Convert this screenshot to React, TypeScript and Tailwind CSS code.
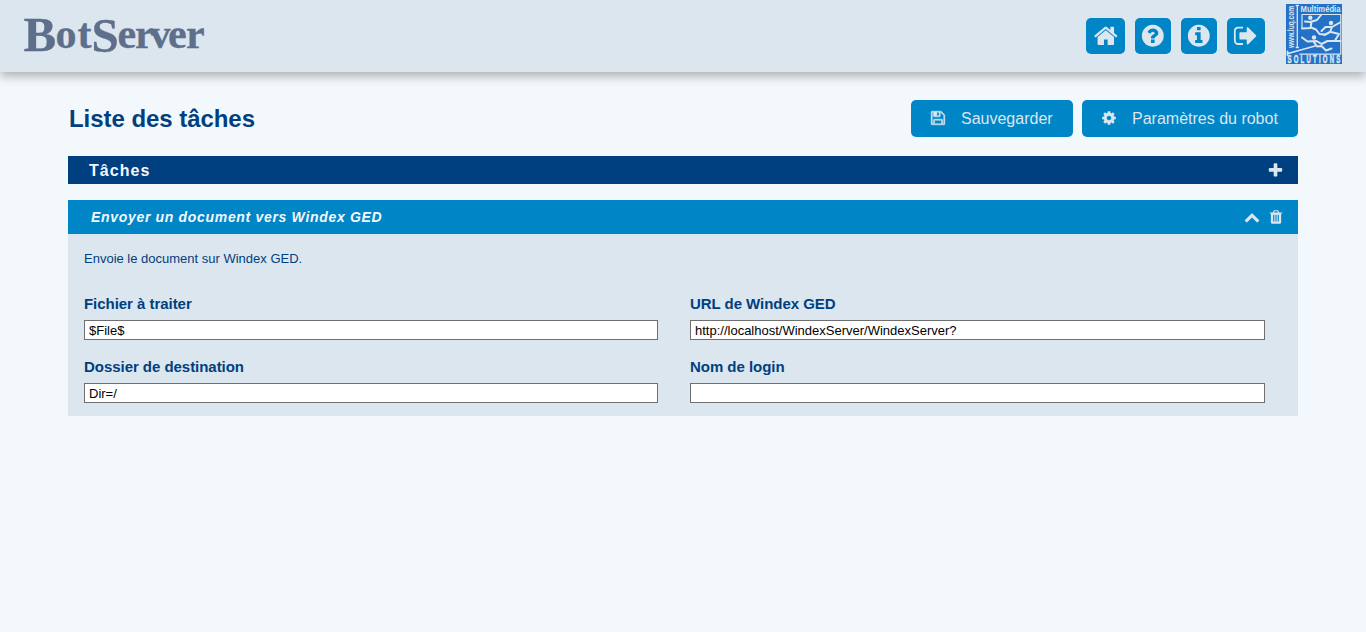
import React from "react";

const CIRCLE =
  "M1664 896q0 209-103 385.5t-279.5 279.5-385.5 103-385.5-103-279.5-279.5-103-385.5 103-385.5 279.5-279.5 385.5-103 385.5 103 279.5 279.5 103 385.5z";

const ICONS = {
  home: "M1472 992v480q0 26-19 45t-45 19h-384v-384h-256v384h-384q-26 0-45-19t-19-45v-480q0-1 .5-3t.5-3l575-474 575 474q1 2 1 6zm223-69l-62 74q-8 9-21 11h-3q-13 0-21-7l-692-577-692 577q-12 8-24 7-13-2-21-11l-62-74q-8-10-7-23.5t11-21.5l719-599q32-26 76-26t76 26l244 204v-195q0-14 9-23t23-9h192q14 0 23 9t9 23v408l219 182q10 8 11 21.5t-7 23.5z",
  help:
    "M1024 1376v-192q0-14-9-23t-23-9h-192q-14 0-23 9t-9 23v192q0 14 9 23t23 9h192q14 0 23-9t9-23zm256-672q0-88-55.5-163t-138.5-116-170-41q-243 0-371 213-15 24 8 42l132 100q7 6 19 6 16 0 25-12 53-68 86-92 34-24 86-24 48 0 85.5 26t37.5 59q0 38-20 61t-68 45q-63 28-115.5 86.5t-52.5 125.5v36q0 14 9 23t23 9h192q14 0 23-9t9-23q0-19 21.5-49.5t54.5-49.5q32-18 49-28.5t46-35 44.5-48 28-60.5 12.5-81z" +
    CIRCLE,
  info:
    "M1152 1376v-160q0-14-9-23t-23-9h-96v-512q0-14-9-23t-23-9h-320q-14 0-23 9t-9 23v160q0 14 9 23t23 9h96v320h-96q-14 0-23 9t-9 23v160q0 14 9 23t23 9h448q14 0 23-9t9-23zm-128-896v-160q0-14-9-23t-23-9h-192q-14 0-23 9t-9 23v160q0 14 9 23t23 9h192q14 0 23-9t9-23z" +
    CIRCLE,
  signOut:
    "M704 1440q0 4 1 20t.5 26.5-3 23.5-10 19.5-20.5 6.5h-320q-119 0-203.5-84.5t-84.5-203.5v-704q0-119 84.5-203.5t203.5-84.5h320q13 0 22.5 9.5t9.5 22.5q0 4 1 20t.5 26.5-3 23.5-10 19.5-20.5 6.5h-320q-66 0-113 47t-47 113v704q0 66 47 113t113 47h312l11.5 1 11.5 3 8 5.5 7 9 2 13.5zm928-544q0 26-19 45l-544 544q-19 19-45 19t-45-19-19-45v-288h-448q-26 0-45-19t-19-45v-384q0-26 19-45t45-19h448v-288q0-26 19-45t45-19 45 19l544 544q19 19 19 45z",
  save: "M512 1536h768v-384h-768v384zm896 0h128v-896q0-14-10-38.5t-20-34.5l-281-281q-10-10-34-20t-39-10v416q0 40-28 68t-68 28h-576q-40 0-68-28t-28-68v-416h-128v1280h128v-416q0-40 28-68t68-28h832q40 0 68 28t28 68v416zm-384-928v-320q0-13-9.5-22.5t-22.5-9.5h-192q-13 0-22.5 9.5t-9.5 22.5v320q0 13 9.5 22.5t22.5 9.5h192q13 0 22.5-9.5t9.5-22.5zm640 32v928q0 40-28 68t-68 28h-1344q-40 0-68-28t-28-68v-1344q0-40 28-68t68-28h928q40 0 88 20t76 48l280 280q28 28 48 76t20 88z",
  cog: "M1152 896q0-106-75-181t-181-75-181 75-75 181 75 181 181 75 181-75 75-181zm512-109v222q0 12-8 23t-20 13l-185 28q-19 54-39 91 35 50 107 138 10 12 10 25t-9 23q-27 37-99 108t-94 71q-12 0-26-9l-138-108q-44 23-91 38-16 136-29 186-7 28-36 28h-222q-14 0-24.5-8.5t-11.5-21.5l-28-184q-49-16-90-37l-141 107q-10 9-25 9-14 0-25-11-126-114-165-168-7-10-7-23 0-12 8-23 15-21 51-66.5t54-70.5q-27-50-41-99l-183-27q-13-2-21-12.5t-8-23.5v-222q0-12 8-23t19-13l186-28q14-46 39-92-40-57-107-138-10-12-10-24 0-10 9-23 26-36 98.5-107.5t94.5-71.5q13 0 26 10l138 107q44-23 91-38 16-136 29-186 7-28 36-28h222q14 0 24.5 8.5t11.5 21.5l28 184q49 16 90 37l142-107q9-9 24-9 13 0 25 10 129 119 165 170 7 8 7 22 0 12-8 23-15 21-51 66.5t-54 70.5q26 50 41 98l183 28q13 2 21 12.5t8 23.5z",
  plus: "M1600 736v192q0 40-28 68t-68 28h-416v416q0 40-28 68t-68 28h-192q-40 0-68-28t-28-68v-416h-416q-40 0-68-28t-28-68v-192q0-40 28-68t68-28h416v-416q0-40 28-68t68-28h192q40 0 68 28t28 68v416h416q40 0 68 28t28 68z",
  chevronUp:
    "M1683 1331l-166 165q-19 19-45 19t-45-19l-531-531-531 531q-19 19-45 19t-45-19l-166-165q-19-19-19-45.5t19-45.5l742-741q19-19 45-19t45 19l742 741q19 19 19 45.5t-19 45.5z",
  trash:
    "M704 1376v-704q0-14-9-23t-23-9h-64q-14 0-23 9t-9 23v704q0 14 9 23t23 9h64q14 0 23-9t9-23zm256 0v-704q0-14-9-23t-23-9h-64q-14 0-23 9t-9 23v704q0 14 9 23t23 9h64q14 0 23-9t9-23zm256 0v-704q0-14-9-23t-23-9h-64q-14 0-23 9t-9 23v704q0 14 9 23t23 9h64q14 0 23-9t9-23zm-544-992h448l-48-117q-7-9-17-11h-317q-10 2-17 11zm928 32v64q0 14-9 23t-23 9h-96v948q0 83-47 143.5t-113 60.5h-832q-66 0-113-58.5t-47-141.5v-952h-96q-14 0-23-9t-9-23v-64q0-14 9-23t23-9h309l70-167q15-37 54-63t79-26h320q40 0 79 26t54 63l70 167h309q14 0 23 9t9 23z",
};

function Icon({ name, className }: { name: keyof typeof ICONS; className: string }) {
  return (
    <svg viewBox="0 0 1792 1792" fill="currentColor" fillRule="evenodd" className={"shrink-0 " + className} aria-hidden="true">
      <path d={ICONS[name]} />
    </svg>
  );
}

function Wordmark() {
  return (
    <svg width="190" height="72" viewBox="20 0 190 72" className="block overflow-visible">
      <text
        fill="#5d6f8a"
        stroke="#5d6f8a"
        strokeWidth="0.3"
        fontFamily="'Liberation Serif', serif"
        fontWeight="700"
        fontSize="42"
      >
        <tspan x="23.5" y="51" fontSize="49">B</tspan>
        <tspan x="55.5 77.5" y="48">ot</tspan>
        <tspan x="91.5" y="52" fontSize="49">S</tspan>
        <tspan x="117.5 135 149.5 168 186" y="48">erver</tspan>
      </text>
    </svg>
  );
}

function PartnerLogo() {
  return (
    <svg width="56" height="60" viewBox="0 0 56 60" className="block overflow-visible">
      <rect width="56" height="60" fill="#2372c8" />
      <g fill="#dce6ee" fontFamily="'Liberation Sans', sans-serif">
        <text x="14.5" y="8.4" fontSize="9.5" fontWeight="700" textLength="40" lengthAdjust="spacingAndGlyphs">Multimédia</text>
        <text transform="translate(8 44) rotate(-90)" fontSize="9" fontWeight="700" textLength="42" lengthAdjust="spacingAndGlyphs">www.luq.com</text>
        <text
          transform="translate(1.5 59) scale(0.6 1)"
          fontSize="10"
          fontWeight="700"
          stroke="#dce6ee"
          strokeWidth="0.5"
          textLength="88"
          lengthAdjust="spacing"
        >
          SOLUTIONS
        </text>
      </g>
      <g fill="none" stroke="#dce6ee" strokeWidth="2" strokeLinecap="round" strokeLinejoin="round">
        <path d="M11.3 1.5v42M10.2 1.5h2.2M10.2 43.5h2.2" strokeWidth="1.3" />
        <path d="M16 23.5v-13h38.8v39.7h-41" strokeWidth="1.2" />
        <path d="M2 49.5L29 42M1.5 47.5v3.5" strokeWidth="1.8" />
        <path d="M19 17.5l5 .5 7-2 4-5M25.5 18l-1 6-8.5 .5M25 23.5l5 2 3.5 4.5 5 .5" />
        <path d="M54 18.5l-8 4.5-6.5 0-4 4M46 23l-2 5-5.5 3M45 28l8 2-4 6.5" />
        <path d="M16 33.5l5.5 4 9-.5 5 3 6-3h13M27.5 37.5l3.5 5 4.5-.5 4.5 4.5 5.5-2" />
      </g>
      <g fill="#dce6ee">
        <circle cx="24.3" cy="13.8" r="2.2" />
        <circle cx="45" cy="19" r="2.2" />
        <circle cx="28" cy="33.5" r="2.2" />
      </g>
    </svg>
  );
}

const square = "flex h-9 items-center justify-center rounded-[5px] bg-[#0085c7] text-[#dce6ee]";

function Header() {
  return (
    <header className="flex h-[72px] justify-between bg-[#dce6ef] pr-6 pl-5 shadow-[0_4px_10px_rgba(0,0,0,0.3)]">
      <Wordmark />
      <nav className="flex">
        <div className="mr-[21px] flex gap-2.5 pt-[18px]">
          <button className={square + " w-[39px]"} aria-label="Accueil"><Icon name="home" className="size-[25.6px]" /></button>
          <button className={square + " w-9"} aria-label="Aide"><Icon name="help" className="size-[25.6px]" /></button>
          <button className={square + " w-9"} aria-label="Informations"><Icon name="info" className="size-[25.6px]" /></button>
          <button className={square + " w-[38px]"} aria-label="Quitter"><Icon name="signOut" className="size-[25.6px]" /></button>
        </div>
        <div className="pt-1"><PartnerLogo /></div>
      </nav>
    </header>
  );
}

function Field({ label, value }: { label: string; value: string }) {
  return (
    <label className="block">
      <span className="block h-[25px] text-[15px] leading-[18px] font-bold tracking-[-0.04px] text-[#004080]">{label}</span>
      <input
        type="text"
        defaultValue={value}
        className="block h-5 w-full border border-[#6f6f6f] bg-white px-1 text-[13px] leading-[18px] text-black outline-none"
      />
    </label>
  );
}

export default function App() {
  return (
    <div className="min-h-screen bg-[#f3f8fc] font-['Liberation_Sans',Arial,sans-serif]">
      <Header />
      <main className="mr-[68px] ml-[68px] pt-7">
        <div className="flex h-[37px] items-center justify-between">
          <h1 className="pl-px text-2xl font-bold tracking-[-0.05px] text-[#004080]">Liste des tâches</h1>
          <div className="flex gap-[9px] text-base text-[#dce6ef]">
            <button className="flex h-[37px] w-[162px] items-center rounded-[5px] bg-[#0085c7] pl-[19px]">
              <Icon name="save" className="mr-[15px] mb-px size-4 stroke-current stroke-[50]" />
              Sauvegarder
            </button>
            <button className="flex h-[37px] w-[216px] items-center rounded-[5px] bg-[#0085c7] pl-[19px]">
              <Icon name="cog" className="mr-[15px] mb-px size-4" />
              Paramètres du robot
            </button>
          </div>
        </div>

        <section className="mt-[19px] flex h-7 items-center justify-between bg-[#004080] pr-[14px] pl-[21px]">
          <h2 className="pt-0.5 text-base leading-6 font-bold tracking-[1.05px] text-[#f3f8fc]">Tâches</h2>
          <Icon name="plus" className="size-[17px] text-[#dce6ef]" />
        </section>

        <section className="mt-4 bg-[#dce6ef]">
          <div className="flex h-[34px] items-center justify-between bg-[#0085c7] pr-[14.5px] pl-[23px]">
            <h3 className="text-sm leading-5 font-bold tracking-[0.68px] text-[#f3f8fc] italic">Envoyer un document vers Windex GED</h3>
            <div className="flex gap-[7.5px] text-[#dce6ef]">
              <Icon name="chevronUp" className="size-4" />
              <Icon name="trash" className="size-4" />
            </div>
          </div>
          <div className="h-[182px] pr-[33px] pl-4">
            <p className="h-[61px] pt-[17px] text-[13px] leading-4 text-[#004080]">Envoie le document sur Windex GED.</p>
            <div className="grid grid-cols-[574px_575px] gap-x-8 gap-y-[18px]">
              <Field label="Fichier à traiter" value="$File$" />
              <Field label="URL de Windex GED" value="http://localhost/WindexServer/WindexServer?" />
              <Field label="Dossier de destination" value="Dir=/" />
              <Field label="Nom de login" value="" />
            </div>
          </div>
        </section>
      </main>
    </div>
  );
}
